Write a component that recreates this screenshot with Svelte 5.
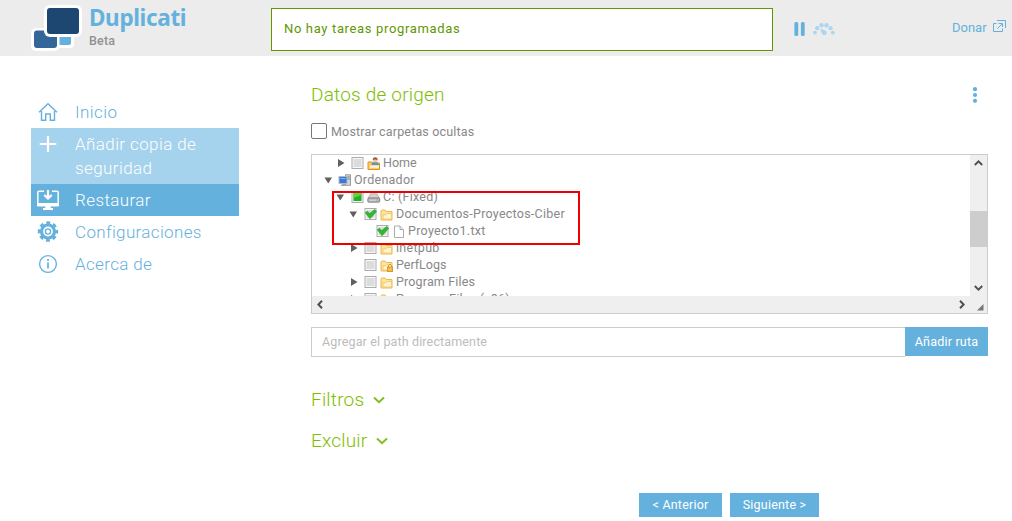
<script>
  const rows = [
    { label: 'Home', pad: 24, arrow: 'right', check: 'off', icon: 'home', ls: 0 },
    { label: 'Ordenador', pad: 12, arrow: 'down', check: null, icon: 'computer', ls: 0.25 },
    { label: 'C: (Fixed)', pad: 24, arrow: 'down', check: 'partial', icon: 'drive', ls: 0.25 },
    { label: 'Documentos-Proyectos-Ciber', pad: 37, arrow: 'down', check: 'on', icon: 'folder', ls: 0.25 },
    { label: 'Proyecto1.txt', pad: 49, arrow: null, check: 'on', icon: 'file', ls: 0.3 },
    { label: 'inetpub', pad: 37, arrow: 'right', check: 'off', icon: 'folder', ls: 0.3 },
    { label: 'PerfLogs', pad: 37, arrow: null, check: 'off', icon: 'locked', ls: 0 },
    { label: 'Program Files', pad: 37, arrow: 'right', check: 'off', icon: 'folder', ls: 0.15 },
    { label: 'Program Files (x86)', pad: 37, arrow: 'right', check: 'off', icon: 'folder', ls: 0.25 }
  ];
</script>

<div class="page">
  <header>
    <svg class="logo" width="54" height="48" viewBox="0 0 54 48">
      <rect x="22" y="24" width="21" height="20" rx="4" fill="#fff" />
      <rect x="25" y="27" width="15" height="14" rx="2" fill="#65b1dd" />
      <rect x="0" y="24" width="28.5" height="23" rx="5" fill="#fff" />
      <rect x="3" y="26.5" width="23" height="17.5" rx="3" fill="#346699" />
      <rect x="13" y="1" width="38" height="32" rx="6" fill="#fff" />
      <rect x="16" y="4" width="32" height="26" rx="3" fill="#1d4771" />
    </svg>
    <div class="brand"><b>Duplicati</b><span>Beta</span></div>
    <div class="status"><span>No hay tareas programadas</span></div>
    <svg class="pause" width="11" height="14" viewBox="0 0 11 14" fill="#65b1dd">
      <rect x=".4" width="3.8" height="14" rx="1.5" /><rect x="6.9" width="3.8" height="14" rx="1.5" />
    </svg>
    <svg class="gauge" width="22" height="12" viewBox="0 0 22 12" fill="#add6ed">
      <circle cx="2" cy="9.7" r="1.9" /><circle cx="4.2" cy="5.2" r="2.1" /><circle cx="8.5" cy="2.3" r="2.2" /><circle cx="13.5" cy="2.3" r="2.2" /><circle cx="17.6" cy="5.2" r="2.1" /><circle cx="19.8" cy="9.7" r="1.9" />
      <path d="M7 5.4L12.4 7.4A2.5 2.5 0 1 1 8.7 9.7Z" />
    </svg>
    <span class="donate">Donar</span>
    <svg class="external" width="14" height="13" viewBox="0 0 14 13" fill="none" stroke="#65b1dd">
      <path d="M3.5 3.5H.5V11.5H9.5V8.5M4 .5H12.5V8M9 4L4.5 8.5M5.5 3.5H9.5V7" />
    </svg>
  </header>

  <div class="body">
    <nav>
      <div class="item">
        <svg width="24" height="24" viewBox="0 0 24 24" fill="none" stroke="#65b1dd" stroke-width="1.4"><path d="M3 12.3L12 3.8L21 12.3M5.5 11V20.3H9.7V14H14.3V20.3H18.5V11" /></svg>
        <span style="letter-spacing:0.45px">Inicio</span>
      </div>
      <div class="item light">
        <svg width="24" height="24" viewBox="0 0 24 24" fill="none" stroke="#fff" stroke-width="2.2"><path d="M12 4V20M3.7 12H20.3" /></svg>
        <span style="letter-spacing:0.4px">Añadir copia de<br />seguridad</span>
      </div>
      <div class="item active">
        <svg width="24" height="24" viewBox="0 0 24 24" fill="none" stroke="#fff"><path stroke-width="1.5" d="M8 3.2H3Q1.8 3.2 1.8 4.4V17H22.2V4.4Q22.2 3.2 21 3.2H16" /><path stroke-width="2.2" d="M12 2V10M8.3 7L12 10.5L15.7 7" /><path fill="#fff" stroke="none" d="M1 15H23V17.5Q23 18.5 22 18.5H14.5L15 20H17V22H7V20H9L9.5 18.5H2Q1 18.5 1 17.5Z" /></svg>
        <span style="letter-spacing:0.4px">Restaurar</span>
      </div>
      <div class="item">
        <svg width="24" height="24" viewBox="0 0 24 24" fill="none" stroke="#65b1dd">
          <circle cx="12" cy="11.5" r="8.8" stroke-width="2.8" stroke-dasharray="3.9 3.012" stroke-dashoffset="1.95" /><circle cx="12" cy="11.5" r="6.5" stroke-width="3.2" /><circle cx="12" cy="11.5" r="2.6" stroke-width="1.4" />
        </svg>
        <span style="letter-spacing:0.35px">Configuraciones</span>
      </div>
      <div class="item">
        <svg width="24" height="24" viewBox="0 0 24 24" fill="none" stroke="#65b1dd"><circle cx="12" cy="12" r="8.4" stroke-width="1.4" /><path stroke-width="1.7" d="M12 10.5V16.5M12 7V9" /></svg>
        <span style="letter-spacing:0.35px">Acerca de</span>
      </div>
    </nav>

    <main>
      <div class="title"><h2>Datos de origen</h2>
        <svg width="6" height="16" viewBox="0 0 6 16" fill="#65b1dd"><circle cx="3" cy="2.2" r="2.1" /><circle cx="3" cy="8" r="2.1" /><circle cx="3" cy="13.8" r="2.1" /></svg>
      </div>
      <div class="hidden-option"><i></i><span>Mostrar carpetas ocultas</span></div>

      <div class="tree">
        <div class="list">
          {#each rows as row}
            <div class="row" style="padding-left:{row.pad}px">
              <svg class="arrow" width="10" height="10" viewBox="0 0 10 10" fill="#606060">
                {#if row.arrow === 'right'}<path d="M2 1V9L8.5 5Z" />{:else if row.arrow === 'down'}<path d="M.5 2.5H8L4.25 8.5Z" />{/if}
              </svg>
              {#if row.check}
                <svg class="check" width="13" height="13" viewBox="0 0 13 13">
                  <rect x="1" y=".5" width="11" height="11" fill="#f8f8f8" stroke="#acacac" />
                  <rect x="2.5" y="2" width="8" height="8" fill="#dcdcdc" />
                  {#if row.check === 'partial'}<rect x="2.5" y="2" width="8" height="8" fill="#1fb41f" /><path d="M2.5 2H10.5V4L2.5 7Z" fill="#5ed34c" />{/if}
                  {#if row.check === 'on'}<path d="M1.3 4.8L3.3 3.3L5.8 5.5L10.6 1.5L12.6 3.5L6 10.8Z" fill="#2dba2d" stroke="#148f14" stroke-width=".5" />{/if}
                </svg>
              {/if}
              <svg class="kind" width="14" height="14" viewBox="0 0 14 14">
                {#if row.icon === 'folder' || row.icon === 'locked'}
                  <path d="M1 12V2.8L1.8 2H5L6.3 3.5H12V12Z" fill="#ffe398" stroke="#ecb951" />
                  <path d="M3 11V6.8H6L7.3 5.5H11.5V11Z" fill="#fff4d2" stroke="#efc464" stroke-width=".8" />
                  {#if row.icon === 'locked'}<rect x="7.5" y="8" width="5" height="4.5" fill="#f3bd49" stroke="#d69a28" /><path d="M8.5 8V6.5Q10 4 11.5 6.5V8" fill="none" stroke="#bd9650" />{/if}
                {:else if row.icon === 'home'}
                  <path d="M1 12.5V5H5L6 6H12.5V12.5Z" fill="#ffcc61" stroke="#df8f2b" />
                  <path d="M4.3 8Q4.5 5 8.2 5Q11.7 5 12 8Z" fill="#5a92d5" /><circle cx="8.2" cy="3.3" r="2.3" fill="#f3c593" /><path d="M5.7 3Q5.7 .3 8.2 .3Q10.7 .3 10.7 3Q8.2 1.8 5.7 3Z" fill="#9b5a2c" /><path d="M3 8.5H12V11H3Z" fill="#fff0c2" />
                {:else if row.icon === 'computer'}
                  <rect x="7.5" y=".8" width="5" height="10.5" fill="#d3d6d8" stroke="#999ea2" /><path d="M9 3H12M9 5H12" stroke="#888" />
                  <rect x="1" y="2.5" width="8" height="7" fill="#3979dc" stroke="#b0bac4" /><path d="M2.5 4.5H7.5" stroke="#83b5f0" /><path d="M2.5 12H9L7.5 10H4Z" fill="#a2a8ae" />
                {:else if row.icon === 'drive'}
                  <path d="M3.5 2.8H10L12.3 7H1Z" fill="#d4d4d4" stroke="#a0a0a0" stroke-width=".7" /><rect x=".8" y="7" width="12" height="4.2" rx="1" fill="#b6b6b6" stroke="#777" stroke-width=".8" /><path d="M2.3 9.2H9" stroke="#ddd" />
                {:else}
                  <path d="M2.5 1H8L11.5 4.5V12.5H2.5Z" fill="#fff" stroke="#aaa" /><path d="M8 1V4.5H11.5" fill="#eee" stroke="#aaa" />
                {/if}
              </svg>
              <span style="letter-spacing:{row.ls}px">{row.label}</span>
            </div>
          {/each}
        </div>
        <div class="vbar">
          <svg width="9" height="6" viewBox="0 0 9 6"><path d="M.8 5L4.5 1.4L8.2 5" /></svg>
          <div class="thumb"></div>
          <svg width="9" height="6" viewBox="0 0 9 6"><path d="M.8 1L4.5 4.6L8.2 1" /></svg>
        </div>
        <div class="hbar">
          <svg width="6" height="9" viewBox="0 0 6 9"><path d="M5 .8L1.4 4.5L5 8.2" /></svg>
          <svg width="6" height="9" viewBox="0 0 6 9"><path d="M1 .8L4.6 4.5L1 8.2" /></svg>
        </div>
        <div class="corner"><svg width="7" height="7" viewBox="0 0 7 7"><path d="M6.5 0V6.5H0Z" fill="#777" /></svg></div>
        <div class="highlight"></div>
      </div>

      <div class="path"><div class="input"><span>Agregar el path directamente</span></div><div class="add"><span>Añadir ruta</span></div></div>

      <div class="section filters"><h2>Filtros</h2><svg width="12" height="8" viewBox="0 0 12 8"><path d="M1 1.5L6 6.2L11 1.5" /></svg></div>
      <div class="section exclude"><h2>Excluir</h2><svg width="12" height="8" viewBox="0 0 12 8"><path d="M1 1.5L6 6.2L11 1.5" /></svg></div>

      <div class="actions"><div class="prev"><span>&lt; Anterior</span></div><div class="next"><span>Siguiente &gt;</span></div></div>
    </main>
  </div>
</div>

<style>
  :global(body) { background: #fff; }
  .page { width: 1012px; height: 521px; overflow: hidden; font-family: Roboto, "Noto Sans", sans-serif; font-size: 12.5px; color: #888; }
  .page * { box-sizing: border-box; }
  svg { display: block; flex: none; }
  span, h2, b { white-space: nowrap; }
  header { height: 56px; background: #ececec; display: flex; align-items: flex-start; }
  .logo { margin: 4px 0 0 31px; }
  .brand { width: 186px; padding-left: 4px; }
  .brand b { display: block; margin-top: 5px; font: bold 22.5px/26px "Noto Sans", sans-serif; letter-spacing: -0.35px; color: #65b1dd; }
  .brand span { display: block; margin-top: 2px; font: 500 12.5px/16px Roboto, sans-serif; letter-spacing: 0.2px; color: #919191; }
  .status { width: 502px; height: 43px; margin-top: 8px; padding: 11px 12px; border: 1px solid #619702; background: #fff; color: #619702; line-height: 17px; }
  .status span { letter-spacing: 0.65px; font-size: 13px; }
  .pause { margin: 22px 0 0 21px; }
  .gauge { margin: 23px 0 0 8px; }
  .donate { width: 34px; margin: 19px 7px 0 117px; line-height: 17px; color: #65b1dd; font-size: 13px; }
  .external { margin-top: 20px; }
  .body { display: flex; }
  nav { width: 208px; margin: 40px 0 0 31px; }
  .item { display: flex; padding: 4px 0 4px 5px; color: #65b1dd; font-size: 17px; line-height: 24px; font-weight: 300; }
  .item span { margin-left: 15px; }
  .light { background: #a5d2ec; color: #fff; }
  .active { background: #65b1dd; color: #fff; }
  main { width: 677px; margin-left: 72px; }
  h2 { margin: 0; font-weight: 300; font-size: 19px; line-height: 24px; color: #80bd00; letter-spacing: 0.2px; }
  .title { margin-top: 27px; height: 24px; display: flex; justify-content: space-between; align-items: center; padding-right: 10px; }
  .hidden-option { display: flex; align-items: center; height: 18px; margin-top: 15px; }
  .hidden-option i { width: 16px; height: 16px; border: 1px solid #777; border-radius: 2px; }
  .hidden-option span { margin-left: 4px; letter-spacing: 0.17px; }
  .tree { position: relative; margin-top: 14px; height: 160px; border: 1px solid #ccc; display: grid; grid-template-columns: 1fr 17px; grid-template-rows: 141px 17px; }
  .list { overflow: hidden; }
  .row { display: flex; align-items: center; height: 17px; }
  .row:first-child { margin-top: -1px; }
  .arrow { margin-right: 4px; }
  .check { margin: 2px 3px 0 1px; }
  .kind { margin: 2px 2px 0 0; }
  .vbar, .hbar, .corner { background: #efefef; display: flex; align-items: center; }
  .vbar { flex-direction: column; padding: 5px 0; }
  .vbar path, .hbar path { fill: none; stroke: #505050; stroke-width: 2; }
  .thumb { width: 17px; height: 36px; background: #cdcdcd; margin: 45px 0 auto; }
  .hbar { justify-content: space-between; padding: 0 5px; }
  .corner { padding: 5px 0 0 7px; }
  .highlight { position: absolute; left: 20px; top: 36px; width: 248px; height: 54px; border: 2px solid #ed0000; }
  .path { display: flex; margin-top: 13px; height: 30px; }
  .input { width: 594px; border: 1px solid #ccc; border-right: 0; padding-left: 10px; line-height: 28px; color: #bcbcbc; letter-spacing: 0.14px; }
  .add, .prev, .next { background: #65b1dd; color: #fff; text-align: center; letter-spacing: 0.2px; }
  .add { width: 83px; height: 29px; line-height: 29px; }
  .section { display: flex; align-items: center; height: 24px; }
  .section svg { margin-left: 9px; }
  .section path { fill: none; stroke: #82bd26; stroke-width: 2; }
  .filters { margin-top: 31px; }
  .exclude { margin-top: 17px; }
  .actions { display: flex; gap: 8px; margin: 40px 0 0 328px; line-height: 24px; }
  .prev { width: 83px; height: 24px; }
  .next { width: 89px; height: 24px; }
</style>
